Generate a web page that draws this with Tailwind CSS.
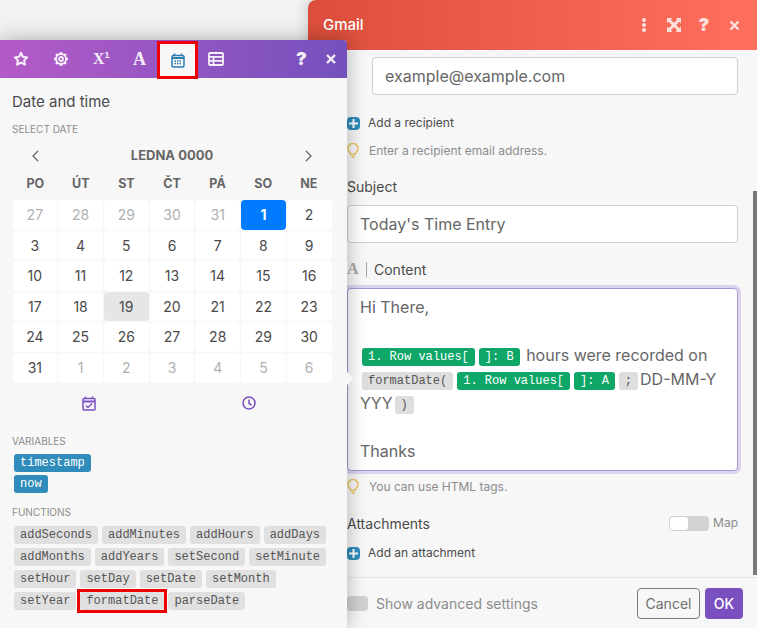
<!DOCTYPE html>
<html>
<head>
<meta charset="utf-8">
<script src="https://cdn.jsdelivr.net/npm/@tailwindcss/browser@4"></script>
</head>
<body class="w-[757px] h-[628px] overflow-hidden bg-[#f2f2f2] relative font-['Inter','Liberation_Sans',sans-serif] text-[#4a4a4a]">

<!-- Gmail module window -->
<div class="ml-[308px] h-[628px] bg-[#f7f7f7] rounded-tl-lg flex flex-col overflow-hidden shadow-[0_0_15px_rgba(0,0,0,0.2)] relative">
    <div class="h-[50px] shrink-0 flex items-center pl-[15px] pr-[8px] bg-gradient-to-r from-[#dc4e3b] to-[#ff6f5e] text-white">
        <span class="text-[15px] font-medium flex-1">Gmail</span>
        <div class="flex items-center text-white/80">
            <span class="w-[30px] flex justify-center">
                <svg width="6" height="14" viewBox="0 0 6 14" fill="currentColor"><circle cx="3" cy="2" r="2"/><circle cx="3" cy="7" r="2"/><circle cx="3" cy="12" r="2"/></svg>
            </span>
            <span class="w-[30px] flex justify-center">
                <svg width="14" height="14" viewBox="0 0 14 14" fill="currentColor"><path d="M0 0h5.500L3.800 1.700 7 4.900l3.200-3.200L8.500 0H14v5.500l-1.700-1.700L9.100 7l3.200 3.200 1.700-1.700V14H8.500l1.700-1.700L7 9.100l-3.200 3.200L5.500 14H0V8.500l1.700 1.700L4.900 7 1.700 3.800 0 5.500z"/></svg>
            </span>
            <span class="w-[30px] text-center text-[18px] font-black leading-none">?</span>
            <span class="w-[30px] flex justify-center">
                <svg width="11" height="11" viewBox="0 0 11 11" stroke="currentColor" stroke-width="2.400"><path d="M1.500 1.500l8 8M9.500 1.500l-8 8"/></svg>
            </span>
        </div>
    </div>
    <div class="flex-1 pl-[39px] pr-[19px] relative">
        <div class="ml-[25px] mt-[7px] h-[38px] bg-white border border-[#cfcfcf] rounded px-[12px] flex items-center text-[16px] text-[#666]">example@example.com</div>
        <div class="flex items-center gap-[8px] mt-[20px] h-[16px] text-[12px]">
            <span class="w-[13px] h-[13px] rounded-sm bg-[#2f8cbb] text-white flex items-center justify-center">
                <svg width="9" height="9" viewBox="0 0 9 9" stroke="currentColor" stroke-width="2"><path d="M4.500 0v9M0 4.500h9"/></svg>
            </span>
            Add a recipient
        </div>
        <div class="flex items-center gap-[10px] mt-[12px] h-[16px] text-[12px] text-[#8c8c8c]">
            <svg width="12" height="16" viewBox="0 0 12 16" fill="none" stroke="#e8c35a" stroke-width="1.500"><path d="M4 11.500C4 9.500 1 8.500 1 5.500a5 5 0 0 1 10 0c0 3-3 4-3 6zM4.500 14h3"/></svg>
            Enter a recipient email address.
        </div>
        <div class="mt-[19px] text-[14px] leading-[18px]">Subject</div>
        <div class="mt-[9px] h-[38px] bg-white border border-[#cfcfcf] rounded px-[12px] flex items-center text-[16px] text-[#666]">Today's Time Entry</div>
        <div class="flex items-center mt-[17px] h-[18px] text-[14px]">
            <span class="font-['Liberation_Serif',serif] font-bold text-[#a8a8a8] text-[16px] w-[12px]">A</span>
            <span class="w-px h-[15px] bg-[#a8a8a8] mx-[7px]"></span>
            Content
        </div>
        <div class="mt-[10px] h-[183px] bg-white border-[1px] border-[#a996d8] rounded ring-[3px] ring-[#dcd3ee] px-[12px] pt-[6px] text-[16px] leading-[24px] text-[#666] relative">
            <div>Hi There,</div>
            <div class="h-[24px]"></div>
            <div>
                <span class="font-['Liberation_Mono',monospace] text-[12px] align-[1px] inline-block leading-[18px] bg-[#0ea768] text-white px-[6px] rounded-[3px] mx-[2px]">1. Row values[</span><span class="font-['Liberation_Mono',monospace] text-[12px] align-[1px] inline-block leading-[18px] bg-[#0ea768] text-white px-[6px] rounded-[3px] mx-[2px]">]: B</span>
                hours were recorded on
            </div>
            <div>
                <span class="font-['Liberation_Mono',monospace] text-[12px] align-[1px] inline-block leading-[18px] bg-[#dedede] text-[#555] px-[6px] rounded-[3px] mx-[2px]">formatDate(</span><span class="font-['Liberation_Mono',monospace] text-[12px] align-[1px] inline-block leading-[18px] bg-[#0ea768] text-white px-[6px] rounded-[3px] mx-[2px]">1. Row values[</span><span class="font-['Liberation_Mono',monospace] text-[12px] align-[1px] inline-block leading-[18px] bg-[#0ea768] text-white px-[6px] rounded-[3px] mx-[2px]">]: A</span><span class="font-['Liberation_Mono',monospace] text-[12px] align-[1px] inline-block leading-[18px] bg-[#dedede] text-[#555] px-[6px] rounded-[3px] mx-[2px]">;</span>DD-MM-Y<br>YYY<span class="font-['Liberation_Mono',monospace] text-[12px] align-[1px] inline-block leading-[18px] bg-[#dedede] text-[#555] px-[6px] rounded-[3px] mx-[2px]">)</span>
            </div>
            <div class="h-[24px]"></div>
            <div>Thanks</div>
        </div>
        <div class="flex items-center gap-[10px] mt-[8px] h-[16px] text-[12px] text-[#8c8c8c]">
            <svg width="12" height="16" viewBox="0 0 12 16" fill="none" stroke="#e8c35a" stroke-width="1.500"><path d="M4 11.500C4 9.500 1 8.500 1 5.500a5 5 0 0 1 10 0c0 3-3 4-3 6zM4.500 14h3"/></svg>
            You can use HTML tags.
        </div>
        <div class="flex items-center mt-[19px] h-[18px] text-[14px]">
            <span class="flex-1">Attachments</span>
            <span class="w-[40px] h-[15px] rounded bg-[#d2d2d2] p-[1px] mr-[4px]"><span class="block w-[18px] h-[13px] rounded-[3px] bg-white"></span></span>
            <span class="text-[12px] text-[#8c8c8c]">Map</span>
        </div>
        <div class="flex items-center gap-[8px] mt-[13px] h-[16px] text-[12px]">
            <span class="w-[13px] h-[13px] rounded-sm bg-[#2f8cbb] text-white flex items-center justify-center">
                <svg width="9" height="9" viewBox="0 0 9 9" stroke="currentColor" stroke-width="2"><path d="M4.500 0v9M0 4.500h9"/></svg>
            </span>
            Add an attachment
        </div>
        <!-- scrollbar thumb -->
        <div class="absolute right-0 top-[141px] w-[4px] h-[384px] bg-[#7a7a7a]"></div>
    </div>
    <div class="h-[51px] shrink-0 border-t border-[#e6e6e6] flex items-center pl-[39px] pr-[19px]">
        <span class="w-[21px] h-[15px] rounded bg-[#d2d2d2] mr-[8px]"></span>
        <span class="flex-1 text-[14px] text-[#8c8c8c]">Show advanced settings</span>
        <span class="h-[31px] w-[63px] border border-[#7a7a7a] rounded flex items-center justify-center text-[14px] text-[#6f6f6f] mr-[5px]">Cancel</span>
        <span class="h-[31px] w-[38px] bg-[#7a4fc0] rounded flex items-center justify-center text-[14px] font-medium text-white -mr-[5px]">OK</span>
    </div>
</div>

<!-- Mapping panel floating over the module -->
<div class="absolute left-0 top-[40px] w-[347px] h-[588px] bg-[#f7f7f7] rounded-tr shadow-[0_0_20px_rgba(0,0,0,0.3)]">
    <div class="h-[38px] flex items-center rounded-tr bg-gradient-to-r from-[#b45ac8] to-[#7450bc] text-white/90 relative">
        <svg class="absolute left-[13px] top-[11px]" width="16" height="16" viewBox="0 0 16 16" fill="none" stroke="currentColor" stroke-width="2"><path d="M8 1.800l1.900 4 4.300.6-3.100 3 .8 4.300L8 11.600l-3.900 2.100.8-4.300-3.100-3 4.300-.6z" stroke-linejoin="round"/></svg>
        <svg class="absolute left-[54px] top-[12px]" width="14" height="14" viewBox="0 0 14 14" fill="none" stroke="currentColor"><circle cx="7" cy="7" r="2" stroke-width="1.800"/><circle cx="7" cy="7" r="5" stroke-width="1.800"/><path d="M7 0v2M7 12v2M0 7h2M12 7h2M2 2l1.500 1.500M10.500 10.500L12 12M12 2l-1.500 1.500M3.500 10.500L2 12" stroke-width="2.400"/></svg>
        <span class="absolute left-[93px] top-[9px] text-[16px] font-bold leading-[20px] font-['Liberation_Serif',serif]">X<sup class="text-[9px] -top-[6px] font-['Liberation_Sans',sans-serif]">1</sup></span>
        <span class="absolute left-[133px] top-[9px] text-[18px] font-bold leading-[20px] font-['Liberation_Serif',serif]">A</span>
        <div class="absolute left-[157px] top-[1px] w-[41px] h-[38px] bg-[#f7f7f7] border-[3px] border-[#ee0000] flex items-center justify-center">
            <svg width="14" height="15" viewBox="0 0 14 15" fill="none" stroke="#2b7cb3"><rect x="1" y="2.500" width="12" height="11.500" rx="1.500" stroke-width="1.500"/><path d="M1 5h12" stroke-width="2"/><path d="M3.500 .5v2M10.500 .5v2" stroke-width="1.500"/><path d="M3.500 8h7M3.500 10.500h7" stroke-width="1.500" stroke-dasharray="1.500 1"/></svg>
        </div>
        <svg class="absolute left-[208px] top-[12px]" width="16" height="14" viewBox="0 0 16 14" fill="none" stroke="currentColor" stroke-width="1.800"><rect x="1" y="1" width="14" height="12" rx="1"/><path d="M1 4.800h14M1 8.800h14M5.500 4.800V13" /></svg>
        <span class="absolute left-[296px] top-[9px] text-[18px] font-black leading-[20px]">?</span>
        <svg class="absolute left-[326px] top-[14px]" width="10" height="10" viewBox="0 0 10 10" stroke="currentColor" stroke-width="2.400"><path d="M1 1l8 8M9 1L1 9"/></svg>
    </div>
    <div class="px-[12px]">
        <div class="text-[15px] leading-[20px] mt-[14px]">Date and time</div>
        <div class="text-[10px] leading-[14px] text-[#8c8c8c] mt-[10px] uppercase">Select date</div>
        <div class="flex items-center justify-between w-[319px] h-[20px] mt-[10px] pl-[19px] pr-[18px]">
            <svg width="8" height="12" viewBox="0 0 8 12" fill="none" stroke="#5e5e5e" stroke-width="1.200"><path d="M7 1L2 6l5 5"/></svg>
            <span class="text-[13px] font-bold text-[#666]">LEDNA 0000</span>
            <svg width="8" height="12" viewBox="0 0 8 12" fill="none" stroke="#5e5e5e" stroke-width="1.200"><path d="M1 1l5 5-5 5"/></svg>
        </div>
        <div class="grid grid-cols-7 w-[319px] ml-[0.5px] mt-[8px] text-center">
            <div class="h-[20px] text-[12.500px] font-bold text-[#666] leading-[20px]">PO</div>
            <div class="h-[20px] text-[12.500px] font-bold text-[#666] leading-[20px]">ÚT</div>
            <div class="h-[20px] text-[12.500px] font-bold text-[#666] leading-[20px]">ST</div>
            <div class="h-[20px] text-[12.500px] font-bold text-[#666] leading-[20px]">ČT</div>
            <div class="h-[20px] text-[12.500px] font-bold text-[#666] leading-[20px]">PÁ</div>
            <div class="h-[20px] text-[12.500px] font-bold text-[#666] leading-[20px]">SO</div>
            <div class="h-[20px] text-[12.500px] font-bold text-[#666] leading-[20px]">NE</div>
        </div>
        <div class="grid grid-cols-7 gap-px w-[319px] ml-[0.5px] mt-[6px] text-center text-[14px] leading-[29.600px] auto-rows-[29.600px]">
            <div class="bg-white rounded text-[#b0b0b0]">27</div><div class="bg-white rounded text-[#b0b0b0]">28</div><div class="bg-white rounded text-[#b0b0b0]">29</div><div class="bg-white rounded text-[#b0b0b0]">30</div><div class="bg-white rounded text-[#b0b0b0]">31</div><div class="bg-[#007bff] rounded text-white font-bold">1</div><div class="bg-white rounded">2</div>
            <div class="bg-white rounded">3</div><div class="bg-white rounded">4</div><div class="bg-white rounded">5</div><div class="bg-white rounded">6</div><div class="bg-white rounded">7</div><div class="bg-white rounded">8</div><div class="bg-white rounded">9</div>
            <div class="bg-white rounded">10</div><div class="bg-white rounded">11</div><div class="bg-white rounded">12</div><div class="bg-white rounded">13</div><div class="bg-white rounded">14</div><div class="bg-white rounded">15</div><div class="bg-white rounded">16</div>
            <div class="bg-white rounded">17</div><div class="bg-white rounded">18</div><div class="bg-[#e6e6e6] rounded">19</div><div class="bg-white rounded">20</div><div class="bg-white rounded">21</div><div class="bg-white rounded">22</div><div class="bg-white rounded">23</div>
            <div class="bg-white rounded">24</div><div class="bg-white rounded">25</div><div class="bg-white rounded">26</div><div class="bg-white rounded">27</div><div class="bg-white rounded">28</div><div class="bg-white rounded">29</div><div class="bg-white rounded">30</div>
            <div class="bg-white rounded">31</div><div class="bg-white rounded text-[#b0b0b0]">1</div><div class="bg-white rounded text-[#b0b0b0]">2</div><div class="bg-white rounded text-[#b0b0b0]">3</div><div class="bg-white rounded text-[#b0b0b0]">4</div><div class="bg-white rounded text-[#b0b0b0]">5</div><div class="bg-white rounded text-[#b0b0b0]">6</div>
        </div>
        <div class="flex w-[320px] -ml-[3px] mt-[13px] h-[16px] text-[#7a4fc0]">
            <div class="w-1/2 flex justify-center">
                <svg width="14" height="15" viewBox="0 0 14 15" fill="none" stroke="currentColor" stroke-width="1.500"><rect x="1" y="2.500" width="12" height="11.500" rx="1"/><path d="M1 5.500h12" stroke-width="2"/><path d="M3.500 .5v2M10.500 .5v2M4 9.500l2 2 4-4"/></svg>
            </div>
            <div class="w-1/2 flex justify-center">
                <svg width="14" height="14" viewBox="0 0 14 14" fill="none" stroke="currentColor" stroke-width="1.500"><circle cx="7" cy="7" r="6"/><path d="M7 3.500V7.500L9.500 9"/></svg>
            </div>
        </div>
        <div class="text-[10px] leading-[14px] text-[#8c8c8c] mt-[22px] uppercase">Variables</div>
        <div class="mt-[6px] flex flex-col items-start gap-[3px] pl-[2px] font-['Liberation_Mono',monospace] text-[12px] leading-[18px] text-white">
            <span class="bg-[#2f8cbb] rounded-[3px] px-[6px]">timestamp</span>
            <span class="bg-[#2f8cbb] rounded-[3px] px-[6px]">now</span>
        </div>
        <div class="text-[10px] leading-[14px] text-[#8c8c8c] mt-[12px] uppercase">Functions</div>
        <div class="mt-[7px] flex flex-wrap gap-[4px] pl-[2px] w-[323px] font-['Liberation_Mono',monospace] text-[12px] leading-[18px] text-[#555]">
            <span class="bg-[#e0e0e0] rounded-[3px] px-[6px]">addSeconds</span>
            <span class="bg-[#e0e0e0] rounded-[3px] px-[6px]">addMinutes</span>
            <span class="bg-[#e0e0e0] rounded-[3px] px-[6px]">addHours</span>
            <span class="bg-[#e0e0e0] rounded-[3px] px-[6px]">addDays</span>
            <span class="bg-[#e0e0e0] rounded-[3px] px-[6px]">addMonths</span>
            <span class="bg-[#e0e0e0] rounded-[3px] px-[6px]">addYears</span>
            <span class="bg-[#e0e0e0] rounded-[3px] px-[6px]">setSecond</span>
            <span class="bg-[#e0e0e0] rounded-[3px] px-[6px]">setMinute</span>
            <span class="bg-[#e0e0e0] rounded-[3px] px-[6px]">setHour</span>
            <span class="bg-[#e0e0e0] rounded-[3px] px-[6px]">setDay</span>
            <span class="bg-[#e0e0e0] rounded-[3px] px-[6px]">setDate</span>
            <span class="bg-[#e0e0e0] rounded-[3px] px-[6px]">setMonth</span>
            <span class="bg-[#e0e0e0] rounded-[3px] px-[6px]">setYear</span>
            <span class="bg-[#e0e0e0] rounded-[3px] px-[6px] relative">formatDate<span class="absolute -inset-[3px] border-[3px] border-[#ee0000]"></span></span>
            <span class="bg-[#e0e0e0] rounded-[3px] px-[6px]">parseDate</span>
        </div>
    </div>
    <!-- little arrow pointing at the editor -->
    <div class="absolute left-[343px] top-[334px] w-[9px] h-[9px] rotate-45 bg-[#f7f7f7]"></div>
</div>
</body>
</html>
